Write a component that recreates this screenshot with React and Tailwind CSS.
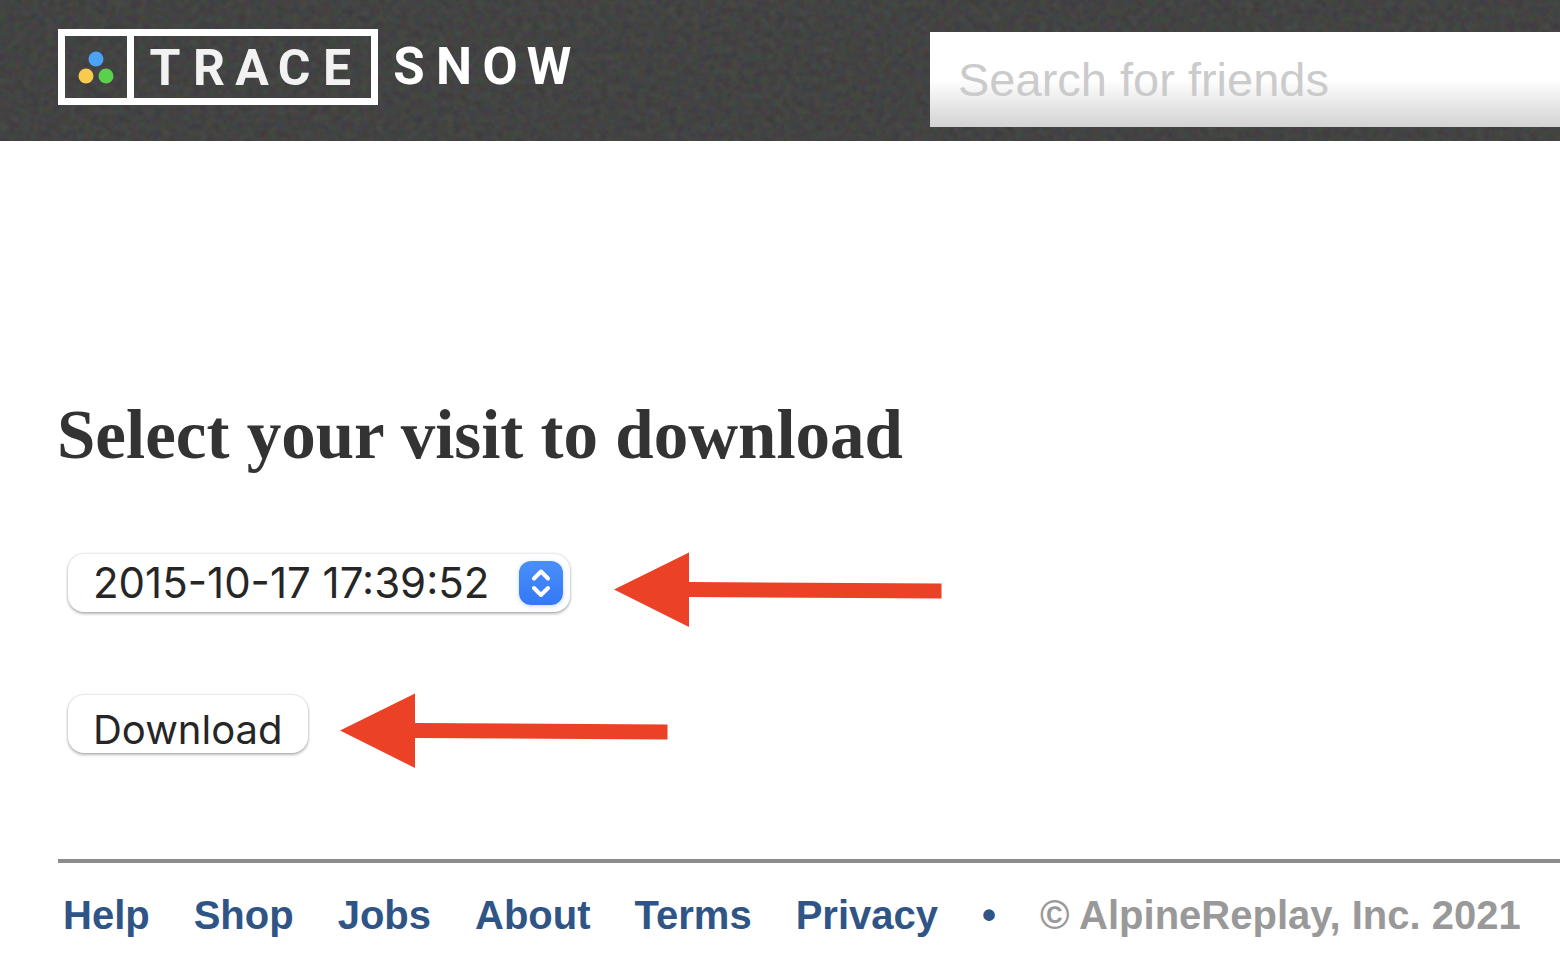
import { useState } from "react";

const visits = ["2015-10-17 17:39:52"];

const footerLinks = ["Help", "Shop", "Jobs", "About", "Terms", "Privacy"];

function Grain() {
  return (
    <svg className="absolute inset-0 h-full w-full" aria-hidden="true">
      <filter
        id="grain"
        x="0"
        y="0"
        width="100%"
        height="100%"
        colorInterpolationFilters="sRGB"
      >
        <feTurbulence type="fractalNoise" baseFrequency="0.13" numOctaves="2" seed="4" />
        <feColorMatrix values="0.1 0 0 0 0.21  0 0.1 0 0 0.212  0 0 0.1 0 0.21  0 0 0 0 1" />
      </filter>
      <rect width="100%" height="100%" filter="url(#grain)" />
    </svg>
  );
}

function Logo() {
  return (
    <svg width="514" height="78" viewBox="0 0 514 78" role="img" aria-label="Trace Snow">
      <g fill="none" stroke="#fff" strokeWidth="7">
        <rect x="3.5" y="4.5" width="313" height="69" />
        <path d="M72.500 4v70" />
      </g>
      <circle cx="38" cy="31" r="7.500" fill="#4aa3f5" />
      <circle cx="28" cy="48" r="7.500" fill="#f8ca4d" />
      <circle cx="48" cy="48" r="7.500" fill="#5bd04e" />
      <g fill="#fff" textAnchor="middle" className="font-[Roboto,sans-serif] font-bold">
        <text x="107 151 194 236 279" y="57" fontSize="50" fill="#f2f2f2">
          TRACE
        </text>
        <text x="351 396 442 491" y="56" fontSize="51">
          SNOW
        </text>
      </g>
    </svg>
  );
}

function Arrow() {
  return (
    <svg width="328" height="76" viewBox="0 0 328 76" fill="#eb4127" aria-hidden="true">
      <path d="M0 37.5 75 0.5V30L327.500 31.500V46.500L75 45V75z" />
    </svg>
  );
}

export default function App() {
  const [visit, setVisit] = useState(visits[0]);
  const [search, setSearch] = useState("");

  const handleSubmit = (event) => {
    event.preventDefault();
  };

  return (
    <div className="min-h-screen overflow-x-hidden bg-white">
      <header className="relative bg-[#424342]">
        <Grain />
        <div className="relative flex items-start pt-7 pb-3.5 pl-[58px]">
          <a href="#" className="shrink-0">
            <Logo />
          </a>
          <input
            type="search"
            aria-label="Search for friends"
            placeholder="Search for friends"
            value={search}
            onChange={(event) => setSearch(event.target.value)}
            className="mt-1 ml-[358px] h-[95px] min-w-0 flex-1 appearance-none bg-linear-to-b from-white from-50% to-[#d3d3d3] px-7 font-['Liberation_Sans',Arial,sans-serif] text-[47px] text-[#333] outline-none placeholder:text-[#cbcbcb]"
          />
        </div>
      </header>

      <main className="pt-[254px] pl-[57px]">
        <h1 className="font-['Liberation_Serif','Times_New_Roman',serif] text-[69px] leading-20 font-bold text-[#333]">
          Select your visit to download
        </h1>
        <form
          onSubmit={handleSubmit}
          className="mt-[77px] flex flex-col items-start gap-[65px] pl-[11px] font-[Inter,sans-serif] text-[40px] text-[#262626]"
        >
          <div className="flex items-start gap-11">
            <div className="relative mt-0.5">
              <select
                aria-label="Visit"
                value={visit}
                onChange={(event) => setVisit(event.target.value)}
                className="block h-[58px] w-[502px] appearance-none rounded-2xl bg-white pl-[25px] text-[42px] leading-[58px] shadow-[0_0_3px_rgba(0,0,0,0.2),0_2px_3px_rgba(0,0,0,0.25)] outline-none"
              >
                {visits.map((item) => (
                  <option key={item}>{item}</option>
                ))}
              </select>
              <span className="pointer-events-none absolute top-[7px] right-[7px] flex h-11 w-11 items-center justify-center rounded-xl bg-linear-to-b from-[#4a8ff8] to-[#3478f6] shadow-[0_1px_4px_rgba(52,120,246,0.3)]">
                <svg
                  width="44"
                  height="44"
                  fill="none"
                  stroke="#fff"
                  strokeWidth="4"
                  strokeLinecap="round"
                  strokeLinejoin="round"
                  aria-hidden="true"
                >
                  <path d="M15 17.500 22 10.500 29 17.500M15 27 22 34 29 27" />
                </svg>
              </span>
            </div>
            <Arrow />
          </div>
          <div className="flex items-start gap-8">
            <button
              type="submit"
              className="mt-0.5 h-[58px] rounded-2xl bg-white px-[25px] pt-1.5 leading-[58px] shadow-[0_0_3px_rgba(0,0,0,0.2),0_2px_3px_rgba(0,0,0,0.25)]"
            >
              Download
            </button>
            <Arrow />
          </div>
        </form>
      </main>

      <footer className="mt-[90px] ml-[58px] border-t-4 border-[#8b8c8b] pt-7 pb-5 font-['Liberation_Sans',Arial,sans-serif] text-[40px] leading-12 font-bold whitespace-nowrap">
        <div className="flex gap-11 pl-[5px]">
          {footerLinks.map((link) => (
            <a key={link} href="#" className="text-[#2f5587]">
              {link}
            </a>
          ))}
          <span className="text-[#2f5587]">•</span>
          <span className="text-[#999]">© AlpineReplay, Inc. 2021</span>
        </div>
      </footer>
    </div>
  );
}
